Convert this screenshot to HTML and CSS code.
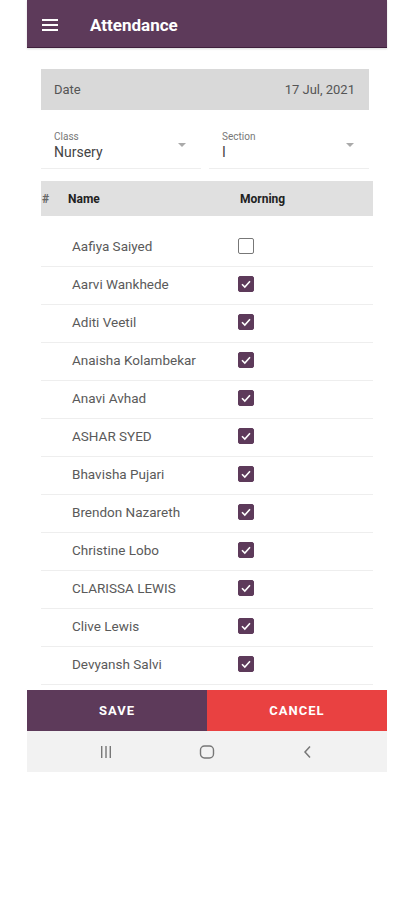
FILE: index.html
```html
<html>

<head>
    <title>Attendance</title>
    <link rel="stylesheet" href="styles.css">
</head>

<body class="body">
    <div class="app">
        <div class="topBar">
            <svg class="menuIcon" width="16" height="12" viewBox="0 0 16 12">
                <rect x="0" y="0" width="16" height="2" fill="#fff"/>
                <rect x="0" y="5" width="16" height="2" fill="#fff"/>
                <rect x="0" y="10" width="16" height="2" fill="#fff"/>
            </svg>
            <span class="topTitle">Attendance</span>
        </div>

        <div class="content">
            <div class="dateBox">
                <span>Date</span>
                <span>17 Jul, 2021</span>
            </div>

            <div class="pickers">
                <div class="picker">
                    <div class="pickerLabel">Class</div>
                    <div class="pickerValue">Nursery</div>
                    <span class="arrow"></span>
                </div>
                <div class="picker">
                    <div class="pickerLabel">Section</div>
                    <div class="pickerValue">I</div>
                    <span class="arrow"></span>
                </div>
            </div>

            <div class="tableHead">
                <span class="colNum">#</span>
                <span class="colName">Name</span>
                <span>Morning</span>
            </div>

            <div class="rows" id="rows"></div>
        </div>

        <div class="actions">
            <button class="saveButton">SAVE</button>
            <button class="cancelButton">CANCEL</button>
        </div>

        <div class="navBar">
            <svg width="14" height="14" viewBox="0 0 14 14">
                <rect x="2" y="1" width="1.4" height="12" fill="#777"/>
                <rect x="6.3" y="1" width="1.4" height="12" fill="#777"/>
                <rect x="10.6" y="1" width="1.4" height="12" fill="#777"/>
            </svg>
            <svg width="16" height="16" viewBox="0 0 16 16">
                <rect x="1.5" y="2" width="13" height="12" rx="4" fill="none" stroke="#777" stroke-width="1.4"/>
            </svg>
            <svg width="14" height="14" viewBox="0 0 14 14">
                <path d="M9 1.5 L4 7 L9 12.5" fill="none" stroke="#777" stroke-width="1.5"/>
            </svg>
        </div>
    </div>

    <script>
        const students = [
            ['Aafiya Saiyed', false],
            ['Aarvi Wankhede', true],
            ['Aditi Veetil', true],
            ['Anaisha Kolambekar', true],
            ['Anavi Avhad', true],
            ['ASHAR SYED', true],
            ['Bhavisha Pujari', true],
            ['Brendon Nazareth', true],
            ['Christine Lobo', true],
            ['CLARISSA LEWIS', true],
            ['Clive Lewis', true],
            ['Devyansh Salvi', true]
        ];
        const rows = document.getElementById('rows');
        const tick = '<svg width="12" height="12" viewBox="0 0 12 12"><path d="M2 6.2 L4.8 9 L10 3.2" fill="none" stroke="#fff" stroke-width="1.6"/></svg>';
        students.forEach(([name, present]) => {
            const row = document.createElement('div');
            row.className = 'row';
            row.innerHTML = `<span></span><span class="studentName">${name}</span>` +
                `<span class="box ${present ? 'checked' : ''}">${present ? tick : ''}</span>`;
            rows.appendChild(row);
        });
    </script>
</body>

</html>
```

FILE: styles.css
```css
.body {
    margin: 0;
    background-color: #fff;
    font-family: Roboto, "Noto Sans", sans-serif;
}

.app {
    width: 360px;
    margin-left: 27px;
}

.topBar {
    height: 47px;
    display: flex;
    align-items: center;
    background-color: #5d3a5a;
    border-bottom: 1px solid #3f1f3c;
    box-shadow: 0 1px 2px rgba(0, 0, 0, 0.15);
}

.menuIcon {
    margin-left: 15px;
    margin-top: 2px;
}

.topTitle {
    margin-left: 32px;
    margin-top: 2px;
    color: #fff;
    font-size: 17px;
    font-weight: bold;
}

.content {
    padding: 0 14px;
}

.dateBox {
    margin-top: 21px;
    width: 328px;
    height: 41px;
    box-sizing: border-box;
    padding: 0 14px 0 13px;
    display: flex;
    align-items: center;
    justify-content: space-between;
    background-color: #d9d9d9;
    color: #555;
    font-size: 13px;
}

.pickers {
    display: flex;
    gap: 8px;
    margin-top: 18px;
    width: 328px;
}

.picker {
    position: relative;
    flex: 1;
    height: 41px;
    box-sizing: border-box;
    padding: 3px 0 0 13px;
    border-bottom: 1px solid #eee;
}

.pickerLabel {
    font-size: 10px;
    color: #777;
}

.pickerValue {
    margin-top: 2px;
    font-size: 14px;
    color: #444;
}

.arrow {
    position: absolute;
    right: 15px;
    top: 15px;
    border-left: 4px solid transparent;
    border-right: 4px solid transparent;
    border-top: 4px solid #aaa;
}

.tableHead {
    margin-top: 12px;
    height: 35px;
    width: 332px;
    display: grid;
    grid-template-columns: 27px 172px 1fr;
    align-items: center;
    background-color: #e0e0e0;
    font-size: 12px;
    font-weight: bold;
    color: #222;
}

.colNum {
    padding-left: 1px;
    color: #666;
}

.rows {
    padding-top: 13px;
    width: 332px;
}

.row {
    height: 38px;
    box-sizing: border-box;
    padding-bottom: 3px;
    display: grid;
    grid-template-columns: 31px 166px 1fr;
    align-items: center;
    border-bottom: 1px solid #eee;
}

.studentName {
    font-size: 13.5px;
    color: #5a5a5a;
}

.box {
    width: 14px;
    height: 14px;
    border: 1.5px solid #777;
    border-radius: 2px;
    display: flex;
    align-items: center;
    justify-content: center;
}

.box.checked {
    border-color: #5d3a5a;
    background-color: #5d3a5a;
}

.actions {
    margin-top: 5px;
    display: flex;
}

.saveButton,
.cancelButton {
    flex: 1;
    height: 41px;
    border: none;
    color: #fff;
    font-family: Roboto, "Noto Sans", sans-serif;
    font-size: 13px;
    font-weight: bold;
    letter-spacing: 1px;
}

.saveButton {
    background-color: #5d3a5a;
}

.cancelButton {
    background-color: #e94141;
}

.navBar {
    height: 41px;
    padding: 0 28px;
    display: grid;
    grid-template-columns: 1fr 1fr 1fr;
    justify-items: center;
    align-items: center;
    background-color: #f2f2f2;
}
```
